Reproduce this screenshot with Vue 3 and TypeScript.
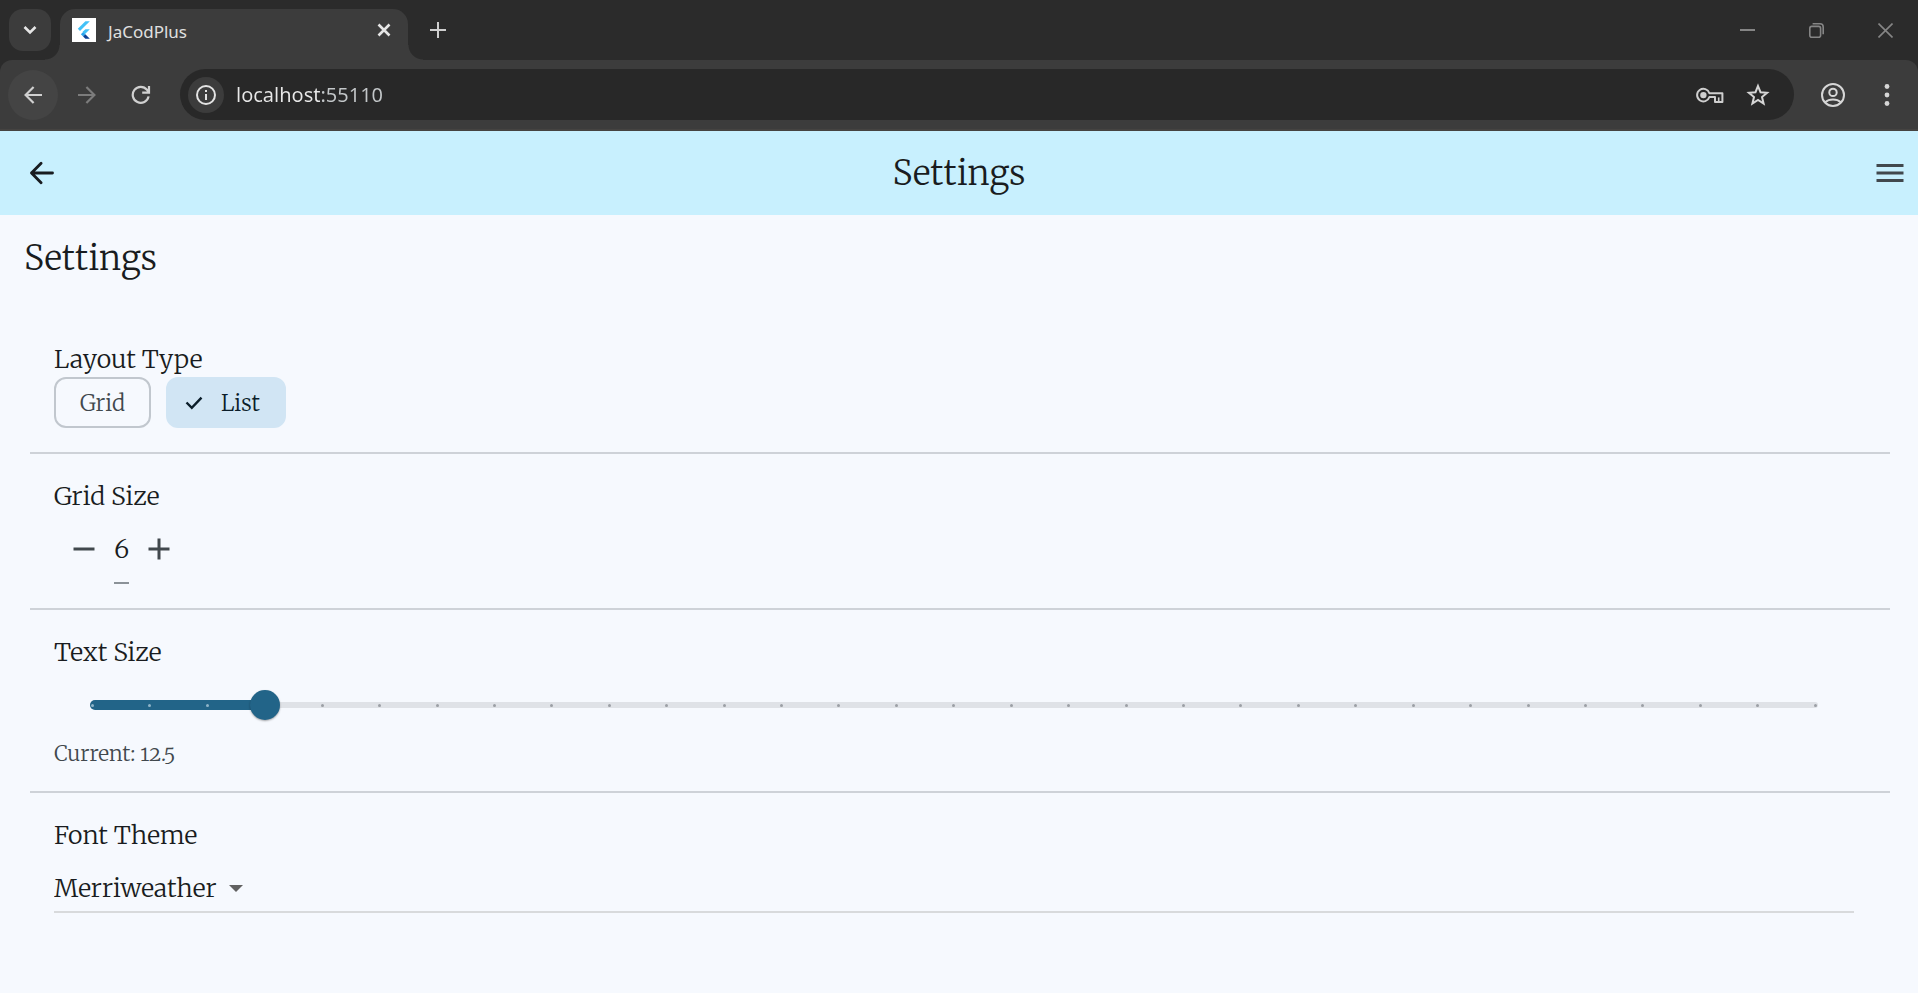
<script setup lang="ts">
import { computed, ref } from 'vue'

type LayoutType = 'Grid' | 'List'

const layoutTypes: LayoutType[] = ['Grid', 'List']
const layout = ref<LayoutType>('List')
const gridSize = ref<number>(6)
const address = ref<string>('localhost:55110')

const minText = 11
const maxText = 26
const textStep = 0.5
const textSize = ref<number>(12.5)
const tickCount = (maxText - minText) / textStep + 1
const activePercent = computed<number>(() => ((textSize.value - minText) / (maxText - minText)) * 100)
const activeTicks = computed<number>(() => (textSize.value - minText) / textStep)

const fonts: string[] = ['Merriweather', 'Roboto', 'Lato']
const fontTheme = ref<string>('Merriweather')
</script>

<template>
  <div class="window">
    <div class="tab-strip">
      <button class="tab-search" aria-label="Search tabs">
        <svg width="16" height="16" viewBox="0 0 16 16"><path d="M2.500 5l5.500 5.500L13.500 5" fill="none" stroke="#e6e6e6" stroke-width="2.600" /></svg>
      </button>
      <div class="tab">
        <svg class="favicon" width="24" height="24" viewBox="0 0 24 24">
          <rect width="24" height="24" fill="#fff" />
          <path d="M13.4 3.2h4.4L8 13l-2.200-2.200z" fill="#42c1f7" />
          <path d="M13.4 11.2h4.400l-5 5-2.200-2.400z" fill="#42c1f7" />
          <path d="M8.9 16.2l2.200-2.200 2.200 2.200-2.200 2.200z" fill="#29a5ee" />
          <path d="M11.1 18.4l2.200-2.200 4.500 4.600h-4.400z" fill="#0b3f94" />
        </svg>
        <span class="tab-title">JaCodPlus</span>
        <button class="bare" aria-label="Close tab">
          <svg width="14" height="14" viewBox="0 0 14 14"><path d="M1.500 1.500l11 11M12.500 1.500l-11 11" stroke="#e6e6e6" stroke-width="2.600" /></svg>
        </button>
      </div>
      <button class="bare new-tab" aria-label="New tab">
        <svg width="16" height="16" viewBox="0 0 16 16"><path d="M8 0v16M0 8h16" stroke="#cfcfcf" stroke-width="2" /></svg>
      </button>
      <div class="window-controls">
        <button class="bare" aria-label="Minimize">
          <svg width="15" height="15" viewBox="0 0 15 15"><path d="M0 7h15" stroke="#858585" stroke-width="2" /></svg>
        </button>
        <button class="bare" aria-label="Restore">
          <svg width="15" height="15" viewBox="0 0 15 15" fill="none" stroke="#858585" stroke-width="1.600">
            <rect x=".8" y="3.400" width="10.800" height="10.800" rx="2" />
            <path d="M3.600 .8h7.400a3.200 3.200 0 0 1 3.200 3.200v7.200" />
          </svg>
        </button>
        <button class="bare" aria-label="Close">
          <svg width="15" height="15" viewBox="0 0 15 15"><path d="M.5 .5l14 14M14.500 .5l-14 14" stroke="#858585" stroke-width="1.600" /></svg>
        </button>
      </div>
    </div>

    <div class="toolbar-back">
      <div class="toolbar">
        <button class="nav nav-lit" aria-label="Back">
          <svg width="18" height="18" viewBox="0 0 18 18" fill="none" stroke="#d0d0d0" stroke-width="2.200"><path d="M18 9H2M9.600 1L1.600 9l8 8" /></svg>
        </button>
        <button class="nav" aria-label="Forward">
          <svg width="18" height="18" viewBox="0 0 18 18" fill="none" stroke="#7c7c7c" stroke-width="2.200"><path d="M0 9h16M8.400 1l8 8-8 8" /></svg>
        </button>
        <button class="nav" aria-label="Reload">
          <svg width="20" height="20" viewBox="0 0 20 20" fill="none" stroke="#d0d0d0" stroke-width="2.200"><path d="M17.600 11.400A8 8 0 1 1 16 4.800l1.600 2M18 1v6.600h-6.800" /></svg>
        </button>
        <div class="omnibox">
          <button class="site-info" aria-label="Site information">
            <svg width="20" height="20" viewBox="0 0 20 20">
              <circle cx="10" cy="10" r="9" fill="none" stroke="#e3e3e3" stroke-width="2" />
              <path d="M9 9h2v6H9zM9 5h2v2H9z" fill="#e3e3e3" />
            </svg>
          </button>
          <input v-model="address" class="address" aria-label="Address" spellcheck="false" />
          <button class="bare" aria-label="Passwords">
            <svg width="28" height="18" viewBox="0 0 28 18">
              <path d="M13.400 7.200A6.300 6.300 0 1 0 13.400 11H19v5h7.400V7.200z" fill="none" stroke="#cfcfcf" stroke-width="2" stroke-linejoin="round" />
              <circle cx="7.400" cy="9.100" r="3.200" fill="#cfcfcf" />
              <path d="M22.700 11.400v4" stroke="#cfcfcf" stroke-width="1.600" />
            </svg>
          </button>
          <button class="bare" aria-label="Bookmark">
            <svg width="24" height="24" viewBox="0 0 24 24"><path d="M12 3l2.500 6.200 6.600.5-5.100 4.300 1.600 6.500L12 17l-5.600 3.500L8 14 2.900 9.700l6.600-.5z" fill="none" stroke="#d6d6d6" stroke-width="2" /></svg>
          </button>
        </div>
        <button class="bare profile" aria-label="Profile">
          <svg width="24" height="24" viewBox="0 0 24 24" fill="none" stroke="#d6d6d6" stroke-width="2">
            <circle cx="12" cy="12" r="11" />
            <circle cx="12" cy="9.400" r="3.700" />
            <path d="M4.200 19.300c4-3.600 11.600-3.600 15.600 0" />
          </svg>
        </button>
        <button class="bare" aria-label="Browser menu">
          <svg width="6" height="24" viewBox="0 0 6 24" fill="#d6d6d6"><circle cx="3" cy="3.500" r="2.400" /><circle cx="3" cy="12" r="2.400" /><circle cx="3" cy="20.500" r="2.400" /></svg>
        </button>
      </div>
    </div>

    <header class="app-bar">
      <button class="bare" aria-label="Go back">
        <svg width="36" height="36" viewBox="0 0 24 24" fill="none" stroke="#191c20" stroke-width="1.900" stroke-linecap="round" stroke-linejoin="round"><path d="M19 12H5M11.400 5.500L5 12l6.400 6.500" /></svg>
      </button>
      <h1 class="app-title">Settings</h1>
      <button class="bare" aria-label="Open menu">
        <svg width="36" height="36" viewBox="0 0 24 24" fill="#41484d"><path d="M3 6h18v2H3zM3 11h18v2H3zM3 16h18v2H3z" /></svg>
      </button>
    </header>

    <main class="page">
      <h2 class="page-title">Settings</h2>

      <section class="setting">
        <h3 class="label">Layout Type</h3>
        <div class="chips">
          <button
            v-for="type in layoutTypes"
            :key="type"
            class="chip"
            :class="{ selected: layout === type }"
            :aria-pressed="layout === type"
            @click="layout = type"
          >
            <svg v-if="layout === type" width="18" height="14" viewBox="0 0 18 14"><path d="M1.500 6.500l5.300 5.300L16.500 1.700" fill="none" stroke="#0b1d29" stroke-width="2.400" /></svg>
            {{ type }}
          </button>
        </div>
      </section>

      <section class="setting">
        <label class="label" for="grid-size">Grid Size</label>
        <div class="stepper">
          <button class="bare" aria-label="Decrease" @click="gridSize--">
            <svg width="36" height="36" viewBox="0 0 24 24" fill="#41484d"><path d="M5 11h14v2H5z" /></svg>
          </button>
          <input id="grid-size" v-model.number="gridSize" class="count" inputmode="numeric" />
          <button class="bare" aria-label="Increase" @click="gridSize++">
            <svg width="36" height="36" viewBox="0 0 24 24" fill="#41484d"><path d="M19 13h-6v6h-2v-6H5v-2h6V5h2v6h6z" /></svg>
          </button>
        </div>
      </section>

      <section class="setting">
        <label class="label" for="text-size">Text Size</label>
        <div class="slider">
          <div class="track">
            <div class="track-active" :style="{ width: activePercent + '%' }"></div>
          </div>
          <div class="ticks">
            <i v-for="n in tickCount" :key="n" class="tick" :class="{ passed: n <= activeTicks }"></i>
          </div>
          <input id="text-size" v-model.number="textSize" class="range" type="range" :min="minText" :max="maxText" :step="textStep" />
        </div>
        <p class="caption">Current: {{ textSize }}</p>
      </section>

      <section class="setting">
        <label class="label" for="font-theme">Font Theme</label>
        <div class="field">
          <select id="font-theme" v-model="fontTheme" class="select">
            <option v-for="font in fonts" :key="font">{{ font }}</option>
          </select>
          <svg width="14" height="7" viewBox="0 0 14 7"><path d="M0 0h14L7 7z" fill="#616161" /></svg>
        </div>
      </section>
    </main>
  </div>
</template>

<style>
html,
body {
  background: #f6f9fe;
}
</style>

<style scoped>
.window {
  color: #191c20;
  font-family: Merriweather, "DejaVu Serif Condensed", "DejaVu Serif", serif;
  font-weight: 350;
  font-variant-numeric: oldstyle-nums;
}

button,
input,
select {
  margin: 0;
  padding: 0;
  border: 0;
  outline: 0;
  background: none;
  color: inherit;
  font: inherit;
}

svg {
  display: block;
  flex: none;
}

.bare {
  flex: none;
}

.tab-strip {
  display: flex;
  align-items: center;
  height: 60px;
  padding: 0 25px 0 9px;
  background: #2b2b2b;
  font-family: "Noto Sans", sans-serif;
  font-weight: 400;
}

.tab-search {
  display: grid;
  place-items: center;
  width: 42px;
  height: 42px;
  border-radius: 14px;
  background: #3c3c3c;
}

.tab {
  position: relative;
  display: flex;
  align-items: center;
  align-self: flex-end;
  box-sizing: border-box;
  width: 348px;
  height: 51px;
  margin-left: 9px;
  padding: 0 17px 9px 12px;
  border-radius: 15px 15px 0 0;
  background: #3c3c3c;
}

.tab::before,
.tab::after {
  content: "";
  position: absolute;
  bottom: 0;
  width: 15px;
  height: 15px;
}

.tab::before {
  right: 100%;
  background: radial-gradient(circle at 0 0, transparent 14px, #3c3c3c 15px);
}

.tab::after {
  left: 100%;
  background: radial-gradient(circle at 100% 0, transparent 14px, #3c3c3c 15px);
}

.tab-title {
  flex: 1;
  padding: 3px 0 0 12px;
  color: #e0e0e0;
  font-size: 17px;
  line-height: 24px;
}

.new-tab {
  margin-left: 22px;
}

.window-controls {
  display: flex;
  gap: 54px;
  margin-left: auto;
}

.toolbar-back {
  background: #2b2b2b;
}

.toolbar {
  display: flex;
  align-items: center;
  box-sizing: border-box;
  height: 71px;
  padding: 0 28px 0 8px;
  border-bottom: 2px solid #454341;
  border-radius: 12px 12px 0 0;
  background: #3c3c3c;
}

.nav {
  display: grid;
  flex: none;
  place-items: center;
  width: 50px;
  height: 50px;
  margin-right: 4px;
  border-radius: 50%;
}

.nav-lit {
  background: #444;
}

.omnibox {
  display: flex;
  flex: 1;
  align-items: center;
  gap: 22px;
  height: 51px;
  margin-left: 10px;
  padding: 0 24px 0 8px;
  border-radius: 26px;
  background: #282828;
}

.site-info {
  display: grid;
  flex: none;
  place-items: center;
  width: 36px;
  height: 36px;
  margin-right: -10px;
  border-radius: 50%;
  background: #3c3c3c;
}

.address {
  flex: 1;
  min-width: 0;
  background: linear-gradient(90deg, #e8e8e8 84px, #c3c7c9 84px);
  background-clip: text;
  color: transparent;
  font-family: "Noto Sans", sans-serif;
  font-size: 20px;
  font-weight: 400;
  font-variant-numeric: normal;
  line-height: 30px;
}

.profile {
  margin: 0 39px 0 27px;
}

.app-bar {
  display: grid;
  grid-template-columns: 1fr auto 1fr;
  align-items: center;
  height: 84px;
  padding: 0 10px 0 24px;
  background: #c8f0fe;
}

.app-bar > :last-child {
  justify-self: end;
}

.app-bar > :first-child {
  justify-self: start;
}

.app-title,
.page-title {
  font-size: 34px;
  font-weight: 350;
  line-height: 44px;
}

.app-title {
  margin: 0 14px 0 0;
}

.page {
  padding: 21px 28px 60px 30px;
}

.page-title {
  margin: 0 -6px 37px;
}

.setting {
  padding: 24px 36px 24px 24px;
}

.setting + .setting {
  border-top: 2px solid #ced2d8;
}

.label {
  display: block;
  margin: 0;
  font-size: 25px;
  font-weight: 350;
  line-height: 36px;
}

.chips {
  display: flex;
  gap: 15px;
}

.chip {
  display: flex;
  align-items: center;
  gap: 18px;
  box-sizing: border-box;
  height: 51px;
  padding: 0 24px;
  border: 2px solid #c1c7ce;
  border-radius: 12px;
  color: #41484d;
  font-size: 22px;
  line-height: 30px;
}

.chip.selected {
  padding: 0 24px 0 17px;
  border-color: #d1e5f4;
  background: #d1e5f4;
  color: #0b1d29;
}

.stepper {
  display: flex;
  gap: 12px;
  align-items: center;
  height: 70px;
  padding-left: 12px;
}

.count {
  box-sizing: border-box;
  width: 15px;
  height: 70px;
  padding-top: 2px;
  border-bottom: 2px solid #8b9298;
  font-size: 25px;
  text-align: center;
}

.slider {
  display: grid;
  align-items: center;
  height: 70px;
  margin: 0 24px;
}

.slider > * {
  grid-area: 1 / 1;
}

.track {
  display: flex;
  align-items: center;
  height: 6px;
  margin: 0 12px;
  border-radius: 3px;
  background: #dfe2e7;
}

.track-active {
  height: 10px;
  border-radius: 5px;
  background: #226488;
}

.ticks {
  display: flex;
  justify-content: space-between;
  margin: 0 13px;
}

.tick {
  width: 3px;
  height: 3px;
  border-radius: 50%;
  background: #9b9fa5;
}

.tick.passed {
  background: #8fb4c9;
}

.range {
  width: 100%;
  height: 36px;
  appearance: none;
}

.range::-webkit-slider-thumb {
  width: 30px;
  height: 30px;
  border-radius: 50%;
  background: #226488;
  box-shadow: 0 1px 2px rgb(0 0 0 / 35%);
  appearance: none;
}

.caption {
  margin: 0;
  color: #41484d;
  font-size: 21px;
  line-height: 27px;
}

.field {
  display: flex;
  align-items: center;
  gap: 12px;
  margin-top: 12px;
  border-bottom: 2px solid #d8dadc;
}

.select {
  height: 46px;
  font-size: 25px;
  appearance: none;
}
</style>
